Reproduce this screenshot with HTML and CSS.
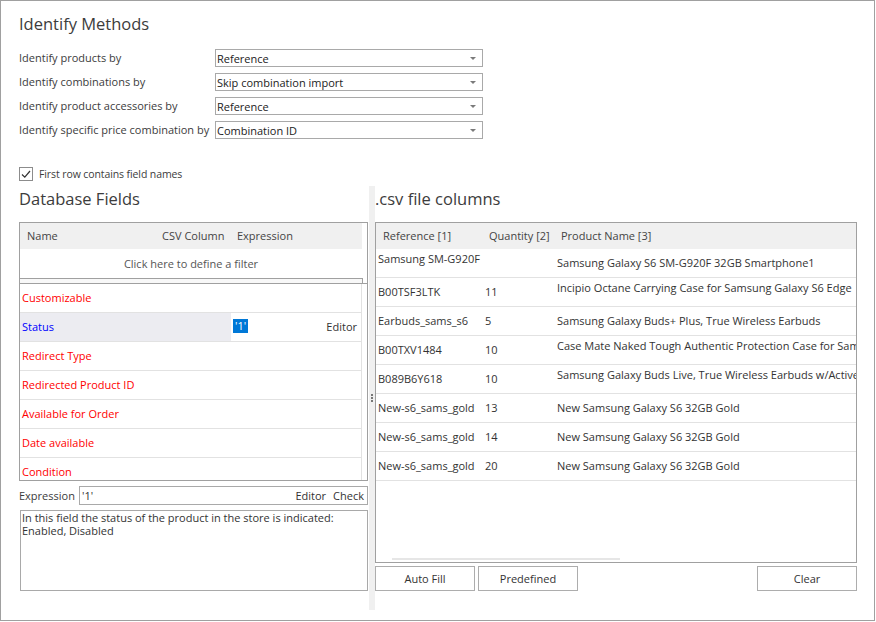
FILE: index.html
```html
<!DOCTYPE html>
<html lang="en">
  <head>
    <meta charset="UTF-8" />
    <title>Import Settings</title>
    <link rel="stylesheet" href="styles.css">
  </head>
  <body>
    <div class="window">
      <h1 class="title">Identify Methods</h1>

      <div class="identify">
        <label>Identify products by</label>
        <div class="combo"><span>Reference</span><i class="arrow"></i></div>
        <label>Identify combinations by</label>
        <div class="combo"><span>Skip combination import</span><i class="arrow"></i></div>
        <label>Identify product accessories by</label>
        <div class="combo"><span>Reference</span><i class="arrow"></i></div>
        <label>Identify specific price combination by</label>
        <div class="combo"><span>Combination ID</span><i class="arrow"></i></div>
      </div>

      <div class="check-row">
        <span class="check">
          <svg width="12" height="12" viewBox="0 0 12 12">
            <polyline points="2,6.5 4.8,9.2 10,3" fill="none" stroke="#333" stroke-width="1.2" />
          </svg>
        </span>
        <span class="check-text">First row contains field names</span>
      </div>

      <div class="lower">
        <div class="left-panel">
          <h2 class="panel-title">Database Fields</h2>

          <div class="fields-grid">
            <div class="grid-head fields-head">
              <div class="c-name">Name</div>
              <div class="c-csv">CSV Column</div>
              <div class="c-expr">Expression</div>
            </div>
            <div class="filter-row">Click here to define a filter</div>
            <div class="band"></div>
            <div class="field-rows">
              <div class="field-row"><span class="req">Customizable</span></div>
              <div class="field-row current">
                <div class="cur-name">Status</div>
                <div class="cur-expr"><span class="sel">'1'</span><span>Editor</span></div>
              </div>
              <div class="field-row"><span class="req">Redirect Type</span></div>
              <div class="field-row"><span class="req">Redirected Product ID</span></div>
              <div class="field-row"><span class="req">Available for Order</span></div>
              <div class="field-row"><span class="req">Date available</span></div>
              <div class="field-row"><span class="req">Condition</span></div>
            </div>
          </div>

          <div class="expr-row">
            <label>Expression</label>
            <div class="expr-box">
              <span>'1'</span>
              <span class="expr-link">Editor</span>
              <span>Check</span>
            </div>
          </div>

          <div class="desc">In this field the status of the product in the store is indicated:<br>Enabled, Disabled</div>
        </div>

        <div class="splitter">
          <svg width="2" height="8" viewBox="0 0 2 8">
            <rect x="0" y="0" width="2" height="2" fill="#777" />
            <rect x="0" y="3" width="2" height="2" fill="#777" />
            <rect x="0" y="6" width="2" height="2" fill="#777" />
          </svg>
        </div>

        <div class="right-panel">
          <h2 class="panel-title">.csv file columns</h2>

          <div class="csv-grid">
            <div class="grid-head csv-head">
              <div class="r1">Reference [1]</div>
              <div class="r2">Quantity [2]</div>
              <div class="r3">Product Name [3]</div>
            </div>
            <div class="csv-row">
              <div class="r1 top">Samsung SM-G920F</div>
              <div class="r2"></div>
              <div class="r3">Samsung Galaxy S6 SM-G920F 32GB Smartphone1</div>
            </div>
            <div class="csv-row">
              <div class="r1">B00TSF3LTK</div>
              <div class="r2">11</div>
              <div class="r3 top">Incipio Octane Carrying Case for Samsung Galaxy S6 Edge</div>
            </div>
            <div class="csv-row">
              <div class="r1">Earbuds_sams_s6</div>
              <div class="r2">5</div>
              <div class="r3">Samsung Galaxy Buds+ Plus, True Wireless Earbuds</div>
            </div>
            <div class="csv-row">
              <div class="r1">B00TXV1484</div>
              <div class="r2">10</div>
              <div class="r3 top">Case Mate Naked Tough Authentic Protection Case for Samsung Galaxy S6</div>
            </div>
            <div class="csv-row">
              <div class="r1">B089B6Y618</div>
              <div class="r2">10</div>
              <div class="r3 top">Samsung Galaxy Buds Live, True Wireless Earbuds w/Active Noise Cancelling</div>
            </div>
            <div class="csv-row">
              <div class="r1">New-s6_sams_gold</div>
              <div class="r2">13</div>
              <div class="r3">New Samsung Galaxy S6 32GB Gold</div>
            </div>
            <div class="csv-row">
              <div class="r1">New-s6_sams_gold</div>
              <div class="r2">14</div>
              <div class="r3">New Samsung Galaxy S6 32GB Gold</div>
            </div>
            <div class="csv-row">
              <div class="r1">New-s6_sams_gold</div>
              <div class="r2">20</div>
              <div class="r3">New Samsung Galaxy S6 32GB Gold</div>
            </div>
            <div class="hscroll"></div>
          </div>

          <div class="btn-row">
            <button>Auto Fill</button>
            <button>Predefined</button>
            <button class="clear">Clear</button>
          </div>
        </div>
      </div>
    </div>
  </body>
</html>
```

FILE: styles.css
```css
body {
  margin: 0;
  background: #fff;
  color: #333;
  font-family: "Open Sans", sans-serif;
  font-size: 11px;
}

.window {
  width: 875px;
  height: 621px;
  box-sizing: border-box;
  border: 1px solid #a0a0a0;
  padding: 11px 17px 0 18px;
}

.title,
.panel-title {
  margin: 0;
  font-weight: normal;
  font-size: 16.5px;
  color: #3c3c3c;
}

.title {
  line-height: 24px;
  margin-bottom: 10px;
}

.identify {
  display: grid;
  grid-template-columns: 196px 268px;
  grid-auto-rows: 24px;
  align-items: center;
}

.identify label {
  color: #3c3c3c;
  white-space: nowrap;
  padding-bottom: 2px;
}

.combo {
  height: 18px;
  box-sizing: border-box;
  border: 1px solid #a9a9a9;
  display: flex;
  align-items: center;
  justify-content: space-between;
  padding: 0 6px 0 1px;
  color: #222;
}

.arrow {
  border-left: 3px solid transparent;
  border-right: 3px solid transparent;
  border-top: 3px solid #7a7a7a;
}

.check-row {
  display: flex;
  align-items: center;
  gap: 6px;
  height: 16px;
  margin-top: 24px;
  color: #3c3c3c;
}

.check-text {
  font-size: 10.5px;
  letter-spacing: -0.1px;
}

.check {
  width: 14px;
  height: 14px;
  box-sizing: border-box;
  border: 1px solid #8c8c8c;
  display: flex;
  align-items: center;
  justify-content: center;
}

.lower {
  display: flex;
  margin-top: 4px;
  height: 424px;
}

.left-panel {
  width: 349px;
  display: flex;
  flex-direction: column;
}

.panel-title {
  height: 36px;
  line-height: 26px;
}

.splitter {
  width: 6px;
  margin-left: 1px;
  background: #f0f0f0;
  display: flex;
  align-items: center;
  justify-content: center;
}

.right-panel {
  width: 482px;
  display: flex;
  flex-direction: column;
}

/* database fields grid */
.fields-grid {
  height: 259px;
  box-sizing: border-box;
  border: 1px solid #a0a0a0;
  overflow: hidden;
}

.grid-head {
  display: flex;
  align-items: center;
  height: 26px;
  box-sizing: border-box;
  padding-bottom: 2px;
  background: #f0f0f0;
  color: #444;
  flex-shrink: 0;
}

.fields-head {
  width: 342px;
}

.fields-head div {
  padding-left: 7px;
  box-sizing: border-box;
}

.c-name {
  width: 135px;
}

.c-csv {
  width: 76px;
}

.fields-head .c-expr {
  padding-left: 6px;
}

.filter-row {
  width: 342px;
  height: 29px;
  display: flex;
  align-items: center;
  justify-content: center;
  color: #555;
}

.band {
  width: 343px;
  height: 5px;
  box-sizing: border-box;
  border-top: 1px solid #a0a0a0;
  border-right: 1px solid #a0a0a0;
  background: #f8f8f8;
}

.field-rows {
  border-top: 1px solid #a0a0a0;
}

.field-row {
  display: flex;
  align-items: center;
  width: 342px;
  height: 29px;
  box-sizing: border-box;
  border-bottom: 1px solid #e2e2e2;
  border-right: 1px solid #e2e2e2;
  padding: 0 0 2px 2px;
}

.req {
  color: #f00;
}

.field-row.current {
  padding: 0;
}

.cur-name {
  width: 211px;
  height: 100%;
  display: flex;
  align-items: center;
  padding: 0 0 2px 2px;
  box-sizing: border-box;
  background: #ececf1;
  color: #00f;
}

.cur-expr {
  flex: 1;
  display: flex;
  align-items: center;
  justify-content: space-between;
  padding: 0 4px 2px 2px;
}

.sel {
  background: #0078d7;
  color: #fff;
  line-height: 14px;
  padding: 0 2px;
}

.expr-row {
  display: flex;
  align-items: center;
  height: 19px;
  margin-top: 5px;
}

.expr-row label {
  width: 60px;
  color: #3c3c3c;
}

.expr-box {
  flex: 1;
  height: 19px;
  box-sizing: border-box;
  border: 1px solid #a9a9a9;
  display: flex;
  align-items: center;
  gap: 7px;
  padding: 0 3px 0 2px;
}

.expr-link {
  margin-left: auto;
}

.desc {
  margin: 5px 0 0 1px;
  height: 81px;
  box-sizing: border-box;
  border: 1px solid #a9a9a9;
  padding: 0 1px;
  line-height: 13px;
}

/* csv grid */
.csv-grid {
  height: 341px;
  box-sizing: border-box;
  border: 1px solid #a0a0a0;
  display: flex;
  flex-direction: column;
  overflow: hidden;
}

.csv-head div {
  padding-left: 7px;
}

.csv-row {
  display: flex;
  height: 29px;
  box-sizing: border-box;
  border-bottom: 1px solid #e2e2e2;
  flex-shrink: 0;
}

.csv-row div {
  display: flex;
  align-items: center;
  white-space: nowrap;
  overflow: hidden;
  line-height: 14px;
}

.r1,
.r2,
.r3 {
  box-sizing: border-box;
}

.r1 {
  width: 106px;
  padding-left: 2px;
}

.r2 {
  width: 72px;
  padding-left: 3px;
}

.r3 {
  flex: 1;
  min-width: 0;
  padding-left: 3px;
}

.csv-row .top {
  align-items: flex-start;
  padding-top: 3px;
}

.hscroll {
  margin: auto 0 2px 16px;
  width: 228px;
  height: 2px;
  background: #e6e6e6;
}

.btn-row {
  display: flex;
  gap: 3px;
  margin-top: 3px;
}

button {
  width: 100px;
  height: 25px;
  border: 1px solid #adadad;
  background: #fff;
  color: #333;
  font-family: inherit;
  font-size: 11px;
  padding: 0 0 1px;
}

.clear {
  margin-left: auto;
}
```
